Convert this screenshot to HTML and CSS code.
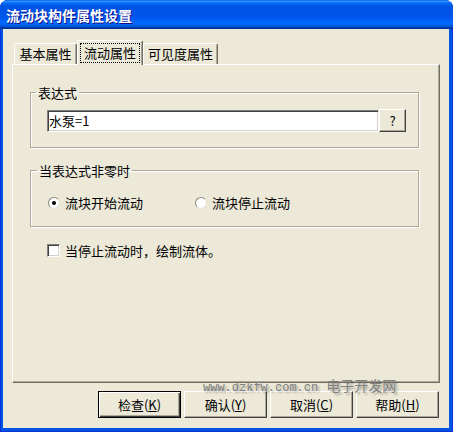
FILE: index.html
```html
<!DOCTYPE html>
<html lang="zh-CN">
<head>
  <meta charset="UTF-8" />
  <title>流动块构件属性设置</title>
  <link rel="stylesheet" href="styles.css">
</head>
<body>
  <div class="window">
    <div class="titlebar"><span class="title">流动块构件属性设置</span></div>
    <div class="client">
      <div class="tabs">
        <div class="tab first">基本属性</div>
        <div class="tab active"><span class="focus">流动属性</span></div>
        <div class="tab last">可见度属性</div>
      </div>

      <div class="panel">
        <fieldset class="group expr">
          <legend>表达式</legend>
          <div class="expr-row">
            <div class="input">水泵=1</div>
            <button class="btn small">?</button>
          </div>
        </fieldset>

        <fieldset class="group flow">
          <legend>当表达式非零时</legend>
          <div class="radio-row">
            <label class="radio start"><span class="circle checked"></span>流块开始流动</label>
            <label class="radio"><span class="circle"></span>流块停止流动</label>
          </div>
        </fieldset>

        <label class="check"><span class="box"></span>当停止流动时，绘制流体。</label>
      </div>

      <div class="buttons">
        <button class="btn default">检查(<u>K</u>)</button>
        <button class="btn">确认(<u>Y</u>)</button>
        <button class="btn">取消(<u>C</u>)</button>
        <button class="btn">帮助(<u>H</u>)</button>
      </div>
    </div>

    <div class="watermark"><span class="url">www.dzkfw.com.cn</span><span class="cn">电子开发网</span></div>
  </div>
</body>
</html>
```

FILE: styles.css
```css
* {
  box-sizing: border-box;
  margin: 0;
  padding: 0;
}

body {
  background: #ffffff;
  font-family: "Noto Sans CJK SC", "Liberation Sans", sans-serif;
  font-size: 13px;
  color: #000000;
}

.window {
  position: relative;
  width: 453px;
  height: 432px;
  display: flex;
  flex-direction: column;
  background: #0054e3;
  border-radius: 8px 8px 0 0;
  box-shadow: inset 0 0 0 1px #0831d9;
  overflow: hidden;
}

.titlebar {
  height: 29px;
  flex-shrink: 0;
  padding: 6px 0 0 6px;
  background: linear-gradient(180deg, #0058ee 0%, #3593ff 4%, #288eff 6%, #127dff 8%, #036ffc 10%, #0262ee 14%, #0057e5 20%, #0054e3 24%, #0055eb 56%, #005bf5 66%, #026afe 76%, #0062ef 86%, #0052d6 92%, #0040ab 94%, #003092 100%);
}

.title {
  color: #ffffff;
  font-weight: bold;
  font-size: 14px;
  line-height: 17px;
  text-shadow: 1px 1px #0f1089;
}

.client {
  flex: 1;
  margin: 0 4px 4px 3px;
  padding: 11px 9px 0 9px;
  background: #ece9d8;
}

/* tabs */
.tabs {
  display: flex;
  align-items: flex-end;
  height: 24px;
  padding-left: 2px;
}

.tab {
  height: 21px;
  line-height: 19px;
  text-align: center;
  background: #ece9d8;
  border: 1px solid;
  border-color: #ffffff #716f64 transparent #ffffff;
  border-bottom: none;
  border-radius: 2px 2px 0 0;
  box-shadow: inset -1px 0 #aca899;
}

.tab.first {
  width: 63px;
}

.tab.active {
  position: relative;
  z-index: 1;
  width: 66px;
  height: 25px;
  margin-bottom: -1px;
  padding: 2px 2px 0;
}

.tab.last {
  width: 75px;
}

.focus {
  display: block;
  height: 20px;
  line-height: 18px;
  border: 1px dotted #000000;
}

/* page */
.panel {
  height: 319px;
  padding: 20px 20px 0 17px;
  border: 1px solid;
  border-color: #ffffff #716f64 #716f64 #ffffff;
  box-shadow: inset -1px -1px #aca899;
}

.group {
  border: 1px solid #aca899;
  box-shadow: inset 1px 1px #ffffff, 1px 1px #ffffff;
}

.group legend {
  padding: 0 2px;
  margin-left: -11px;
  line-height: 15px;
}

.expr {
  padding: 9px 12px 15px 16px;
}

.expr-row {
  display: flex;
  height: 23px;
}

.input {
  flex: 1;
  height: 22px;
  margin-top: 1px;
  padding-left: 1px;
  line-height: 20px;
  background: #ffffff;
  border: 1px solid;
  border-color: #808080 #ffffff #ffffff #808080;
  box-shadow: inset 1px 1px #404040, inset -1px -1px #d4d0c8;
}

.flow {
  margin-top: 15px;
  padding: 17px 12px 16px 17px;
}

.radio-row {
  display: flex;
  align-items: center;
  height: 15px;
}

.radio {
  display: flex;
  align-items: center;
  gap: 5px;
  line-height: 15px;
}

.radio.start {
  width: 147px;
}

.circle {
  display: flex;
  align-items: center;
  justify-content: center;
  width: 12px;
  height: 12px;
  border-radius: 50%;
  background: #ffffff;
  border: 1px solid;
  border-color: #8a887c #e2e0d4 #e2e0d4 #8a887c;
}

.circle.checked::after {
  content: "";
  width: 4px;
  height: 4px;
  border-radius: 50%;
  background: #000000;
}

.check {
  display: flex;
  align-items: center;
  gap: 5px;
  margin: 16px 0 0 17px;
  line-height: 15px;
}

.box {
  width: 13px;
  height: 13px;
  background: #ffffff;
  border: 1px solid;
  border-color: #808080 #ffffff #ffffff #808080;
  box-shadow: inset 1px 1px #404040, inset -1px -1px #d4d0c8;
}

/* buttons */
.buttons {
  display: flex;
  justify-content: flex-end;
  gap: 3px;
  margin-top: 8px;
  padding-right: 1px;
}

.btn {
  width: 83px;
  height: 27px;
  font: inherit;
  line-height: 15px;
  color: #000000;
  background: #ece9d8;
  border: 1px solid;
  border-color: #ffffff #404040 #404040 #ffffff;
  box-shadow: inset -1px -1px #aca899;
}

.btn.small {
  width: 27px;
  height: 23px;
}

.btn.default {
  border: 1px solid #000000;
  box-shadow: inset 1px 1px #ffffff, inset -1px -1px #404040, inset -2px -2px #aca899;
}

.btn u {
  text-underline-offset: 1px;
}

.watermark {
  position: absolute;
  left: 203px;
  top: 379px;
  display: flex;
  align-items: baseline;
  line-height: 13px;
  color: #808080;
  text-shadow: 2px 2px 2px rgba(0, 0, 0, 0.3);
}

.watermark .url {
  font-family: "Liberation Mono", monospace;
  font-size: 12px;
}

.watermark .cn {
  margin-left: 8px;
  font-size: 14px;
}
```
